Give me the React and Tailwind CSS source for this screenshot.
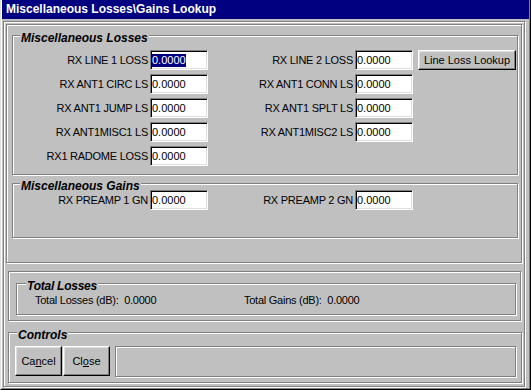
const etched = "border border-[#808080] shadow-[inset_1px_1px_0_#fff,1px_1px_0_#fff]";

function Field({ value = "0.0000", selected }) {
  return (
    <div className="ml-[2px] flex h-[20px] w-[58px] shrink-0 items-center border border-t-[#808080] border-l-[#808080] border-r-white border-b-white bg-white pl-[1px] shadow-[inset_1px_1px_0_#000,inset_-1px_-1px_0_#dfdfdf]">
      <span className={selected ? "bg-[#000080] text-white" : ""}>{value}</span>
    </div>
  );
}

function Row({ left, right, extra, selected }) {
  return (
    <div className="flex h-[20px] items-center">
      <span className="w-[135px] shrink-0 text-right tracking-[-0.25px]">{left}</span>
      <Field selected={selected} />
      {right && (
        <>
          <span className="w-[145px] shrink-0 text-right tracking-[-0.25px]">{right}</span>
          <Field />
        </>
      )}
      {extra}
    </div>
  );
}

function Legend({ children, left }) {
  return (
    <span
      className={`absolute top-[-4px] bg-[#c0c0c0] px-[1px] text-[12px] leading-[13px] font-bold italic ${left}`}
    >
      {children}
    </span>
  );
}

function Button({ children, className = "" }) {
  return (
    <button
      type="button"
      className={`flex items-center justify-center border border-t-white border-l-white border-r-black border-b-black bg-[#c0c0c0] shadow-[inset_-1px_-1px_0_#808080,inset_1px_1px_0_#dfdfdf] ${className}`}
    >
      {children}
    </button>
  );
}

export default function App() {
  return (
    <div className="h-[390px] w-[531px] border-r border-b border-l border-l-[#dfdfdf] border-r-black border-b-black bg-[#c0c0c0] font-['Liberation_Sans',Arial,sans-serif] text-[11px] leading-[13px] text-black">
      <div className="flex h-full flex-col border-r border-b border-l border-l-white border-r-[#808080] border-b-[#808080]">
        <div className="flex h-[19px] shrink-0 items-center bg-[#000080] pl-[4px] text-[12px] font-bold text-white">
          Miscellaneous Losses\Gains Lookup
        </div>

        <div className={`mt-[2px] ml-[1px] flex h-[366px] w-[522px] flex-col ${etched}`}>
          <div className={`mt-[2px] ml-[2px] flex h-[239px] w-[516px] flex-col ${etched}`}>
            <div className={`relative mt-[10px] ml-[5px] flex h-[140px] w-[506px] flex-col gap-[4px] pt-[14px] ${etched}`}>
              <Legend left="left-[7px]">Miscellaneous Losses</Legend>
              <Row
                left="RX LINE 1 LOSS"
                right="RX LINE 2 LOSS"
                selected
                extra={<Button className="ml-[5px] h-[20px] w-[98px]">Line Loss Lookup</Button>}
              />
              <Row left="RX ANT1 CIRC LS" right="RX ANT1 CONN LS" />
              <Row left="RX ANT1 JUMP LS" right="RX ANT1 SPLT LS" />
              <Row left="RX ANT1MISC1 LS" right="RX ANT1MISC2 LS" />
              <Row left="RX1 RADOME LOSS" />
            </div>

            <div className={`relative mt-[8px] ml-[5px] flex h-[55px] w-[506px] flex-col pt-[6px] ${etched}`}>
              <Legend left="left-[7px]">Miscellaneous Gains</Legend>
              <Row left="RX PREAMP 1 GN" right="RX PREAMP 2 GN" />
            </div>
          </div>

          <div className={`mt-[8px] ml-[4px] h-[50px] w-[513px] ${etched}`}>
            <div className={`relative mt-[11px] ml-[7px] flex h-[32px] w-[500px] items-start pt-[10px] pl-[18px] tracking-[-0.25px] ${etched}`}>
              <Legend left="left-[9px]">Total Losses</Legend>
              <span className="w-[209px] whitespace-pre">Total Losses (dB):  0.0000</span>
              <span className="whitespace-pre">Total Gains (dB):  0.0000</span>
            </div>
          </div>

          <div className={`relative mt-[11px] ml-[4px] flex h-[51px] w-[514px] items-start pt-[13px] pr-[5px] pl-[6px] ${etched}`}>
            <Legend left="left-[8px]">Controls</Legend>
            <Button className="h-[30px] w-[47px]">
              <span>
                Ca<span className="underline">n</span>cel
              </span>
            </Button>
            <Button className="ml-[1px] h-[30px] w-[47px]">
              <span>
                Cl<span className="underline">o</span>se
              </span>
            </Button>
            <div className={`ml-[5px] h-[31px] flex-1 ${etched}`} />
          </div>
        </div>
      </div>
    </div>
  );
}
